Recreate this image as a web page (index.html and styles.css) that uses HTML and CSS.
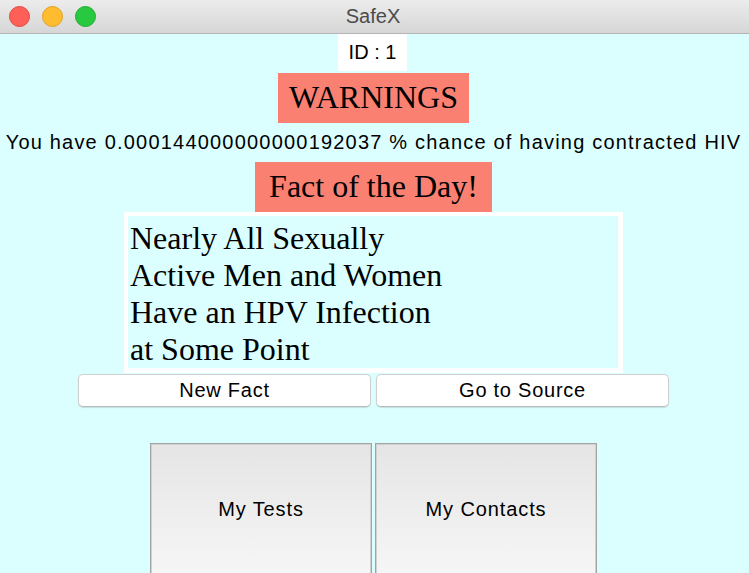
FILE: index.html
```html
<!DOCTYPE html>
<html lang="en">
<head>
<meta charset="utf-8">
<title>SafeX</title>
<link rel="stylesheet" href="styles.css">
</head>
<body>
<div class="window">
  <header class="titlebar">
    <div class="lights">
      <span class="light red"></span>
      <span class="light yellow"></span>
      <span class="light green"></span>
    </div>
    <div class="title">SafeX</div>
  </header>
  <main class="content">
    <div class="id-box">ID : 1</div>
    <div class="banner warn">WARNINGS</div>
    <p class="chance">You have 0.000144000000000192037 % chance of having contracted HIV</p>
    <div class="banner fact-title">Fact of the Day!</div>
    <div class="fact-panel">
      <p class="fact-text">Nearly All Sexually<br>Active Men and Women<br>Have an HPV Infection<br>at Some Point</p>
    </div>
    <div class="fact-buttons">
      <button class="push">New Fact</button>
      <button class="push">Go to Source</button>
    </div>
    <div class="nav">
      <button class="tile">My Tests</button>
      <button class="tile">My Contacts</button>
    </div>
  </main>
</div>
</body>
</html>
```
FILE: styles.css
```css
* { box-sizing: border-box; }

html, body {
  margin: 0;
  padding: 0;
  width: 749px;
  height: 573px;
  overflow: hidden;
  background: #dbffff;
  font-family: "Liberation Sans", Arial, sans-serif;
  color: #000;
}

.window {
  display: flex;
  flex-direction: column;
  height: 573px;
}

.titlebar {
  position: relative;
  height: 34px;
  flex: 0 0 34px;
  background: linear-gradient(#ececec, #d6d6d6);
  border-bottom: 1px solid #b4b4b4;
  display: flex;
  align-items: center;
  justify-content: center;
}

.lights {
  position: absolute;
  left: 9px;
  top: 6px;
  display: flex;
  gap: 12px;
}

.light {
  width: 21px;
  height: 21px;
  border-radius: 50%;
  display: block;
}
.light.red { background: #fe5f57; border: 1px solid #e1463f; }
.light.yellow { background: #febc2e; border: 1px solid #dfa023; }
.light.green { background: #28c840; border: 1px solid #1dad2b; }

.title {
  font-size: 20px;
  color: #4b4b4b;
  margin-left: -3px;
  margin-top: -1px;
}

.content {
  display: flex;
  flex-direction: column;
  align-items: center;
  padding-right: 2px;
}

.id-box {
  width: 69px;
  height: 37px;
  background: #fff;
  font-size: 20px;
  line-height: 37px;
  text-align: center;
  margin-right: 2px;
}

.banner {
  background: #fa8072;
  font-family: "Liberation Serif", "Times New Roman", serif;
  font-size: 32px;
  height: 50px;
  line-height: 49px;
  text-align: center;
}

.warn {
  width: 191px;
  margin-top: 2px;
}

.chance {
  margin: 0;
  height: 39px;
  line-height: 39px;
  font-size: 20px;
  letter-spacing: 1.2px;
  white-space: nowrap;
}

.fact-title {
  width: 237px;
}

.fact-panel {
  width: 499px;
  height: 161px;
  border: 4px solid #fff;
  border-right-width: 5px;
  border-bottom-width: 5px;
  background: #dbffff;
  padding: 4px 2px 0;
}

.fact-text {
  margin: 0;
  font-family: "Liberation Serif", "Times New Roman", serif;
  font-size: 32px;
  line-height: 37px;
}

.fact-buttons {
  margin-top: 1px;
  display: flex;
  gap: 5px;
}

.push {
  width: 293px;
  height: 33px;
  background: #fff;
  border: 1px solid #cfcfcf;
  border-bottom-color: #b9b9b9;
  border-radius: 5px;
  box-shadow: 0 1px 1px rgba(0, 0, 0, 0.12);
  font-family: "Liberation Sans", Arial, sans-serif;
  font-size: 20px;
  letter-spacing: 0.75px;
  color: #000;
  padding: 0;
}

.nav {
  margin-top: 36px;
  display: flex;
  gap: 3px;
}

.tile {
  width: 222px;
  height: 132px;
  background: linear-gradient(#e5e5e5, #f6f6f6);
  border: 1px solid #a3a3a3;
  box-shadow: inset 0 0 0 1px #d0d0d0;
  font-family: "Liberation Sans", Arial, sans-serif;
  font-size: 20px;
  letter-spacing: 0.9px;
  color: #000;
  padding: 0;
}
```
